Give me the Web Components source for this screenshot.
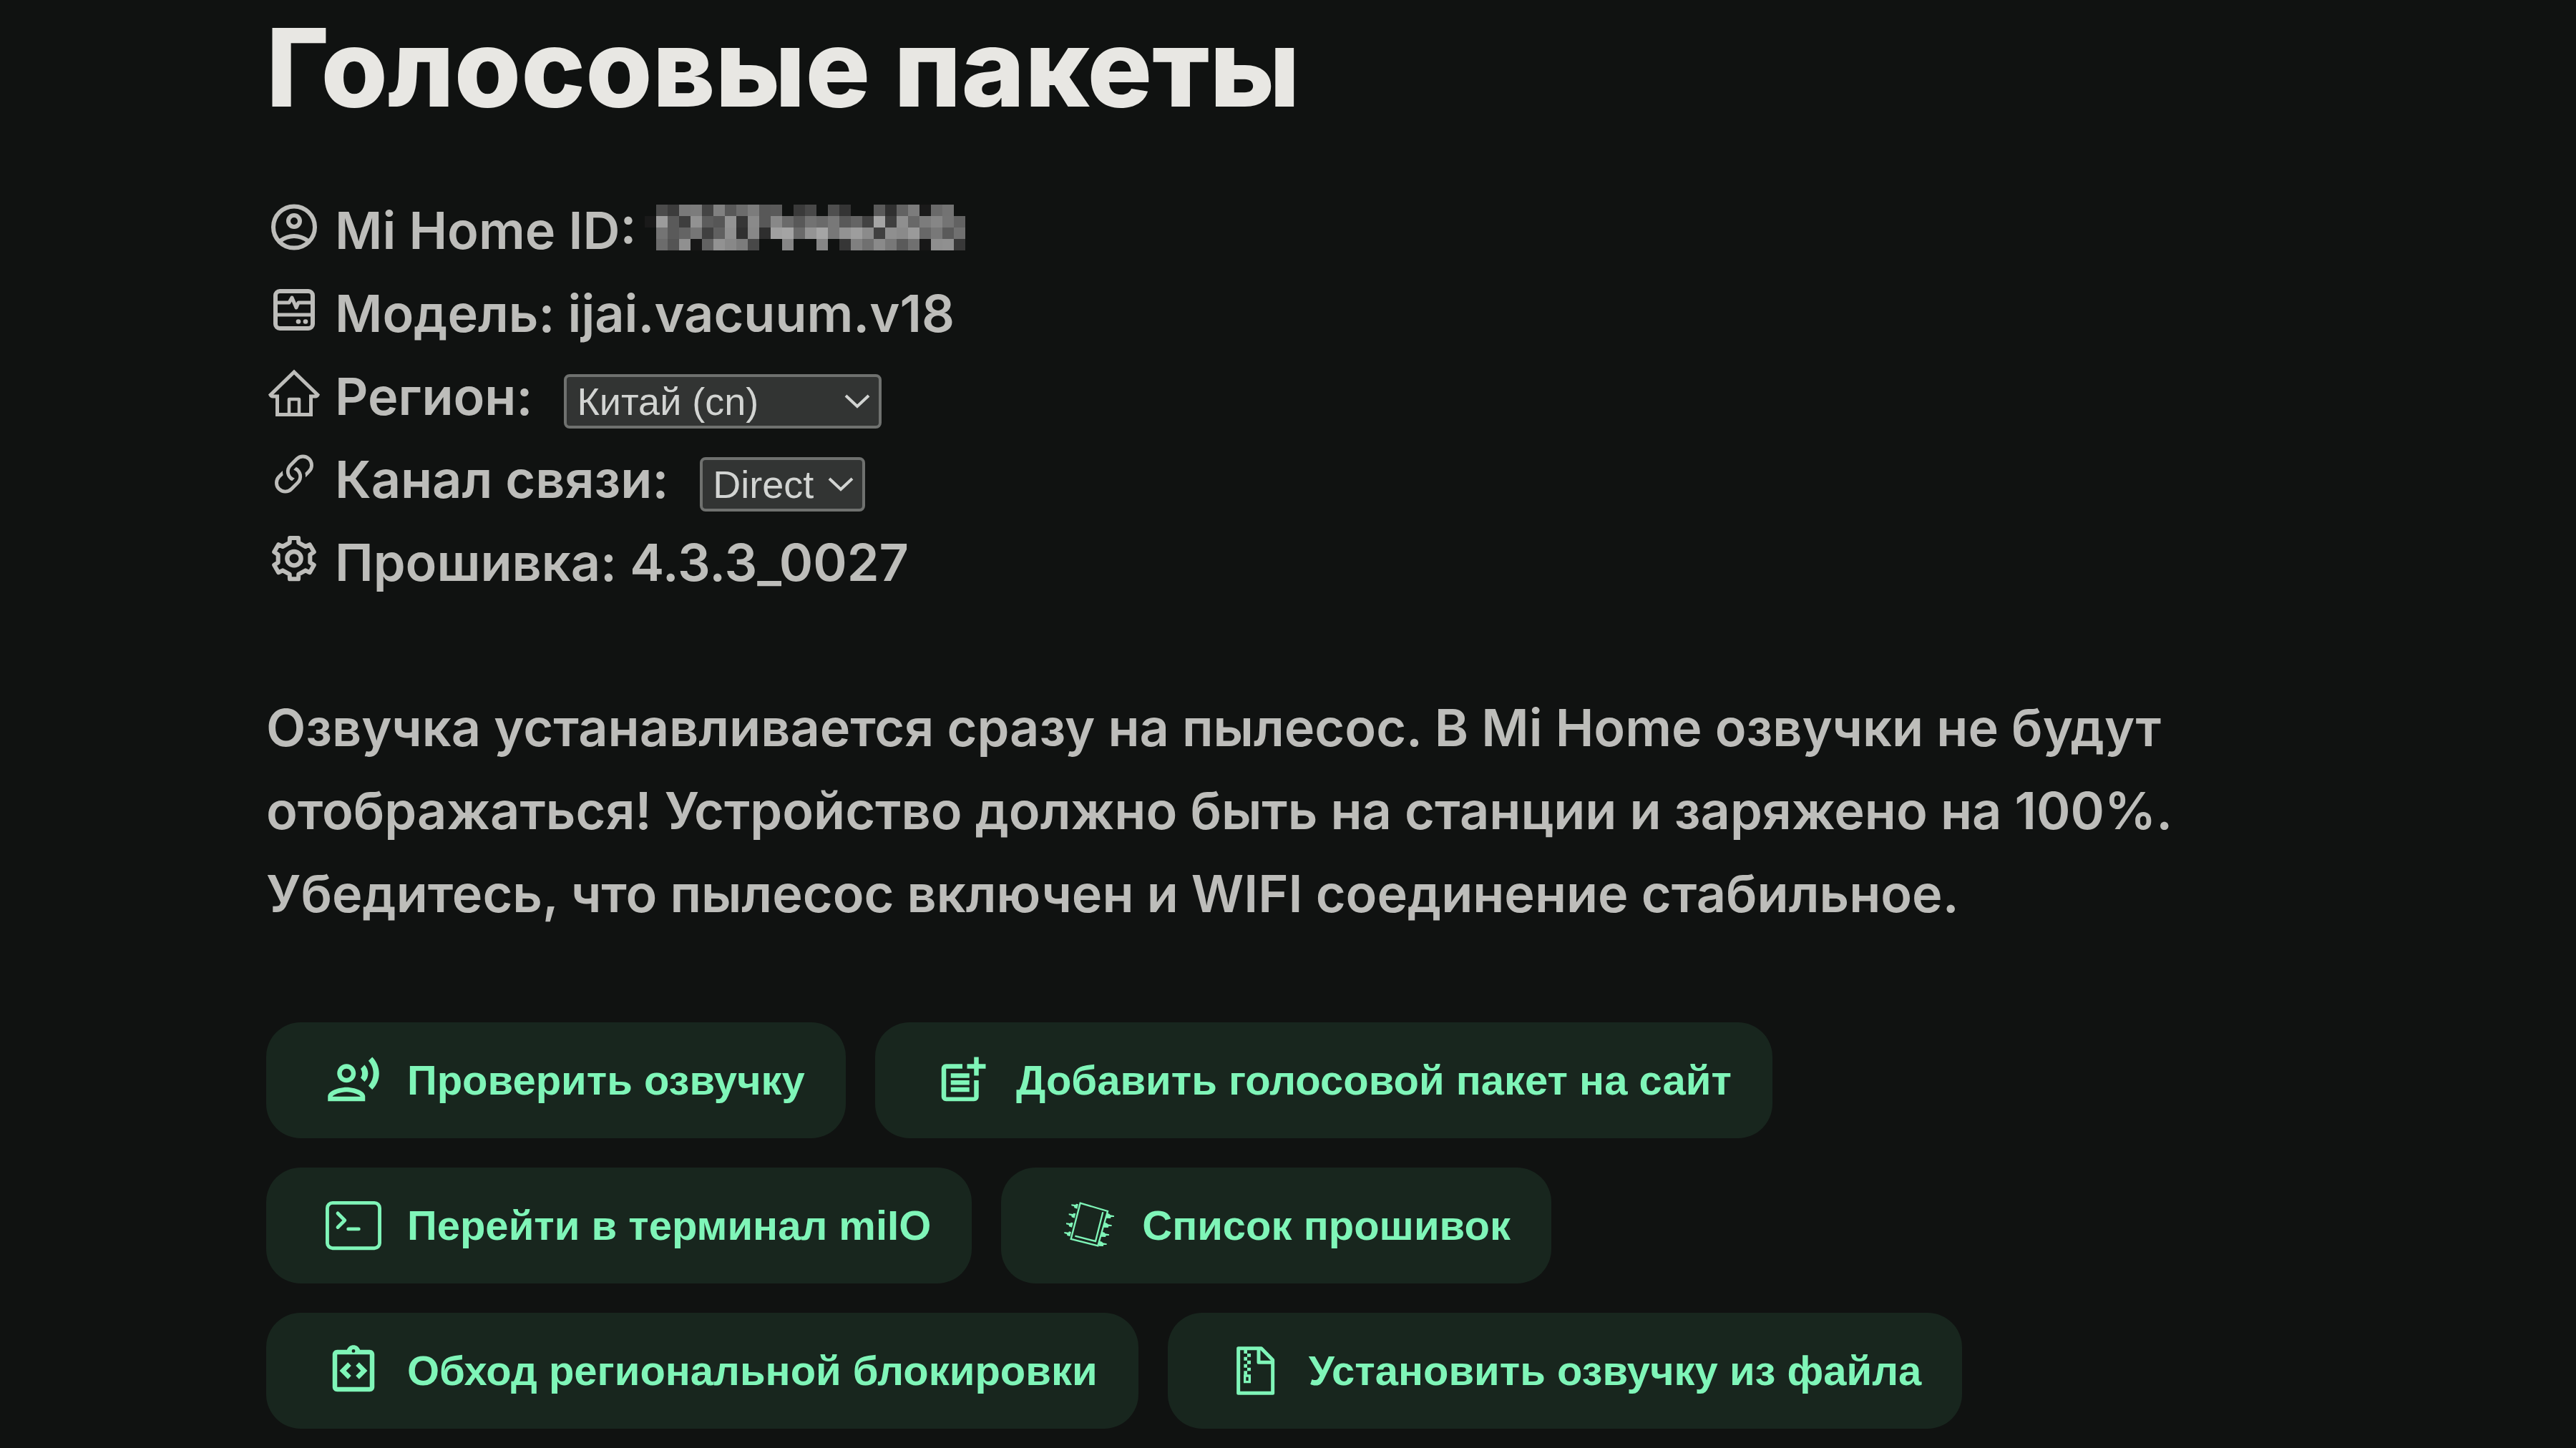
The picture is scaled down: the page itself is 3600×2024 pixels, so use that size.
<!DOCTYPE html>
<html lang="ru">
<head>
<meta charset="utf-8">
<meta name="viewport" content="width=device-width, initial-scale=1">
<title>Голосовые пакеты</title>
<style>
  :root {
    --bg: #101211;
    --text: #bdbdba;
    --heading: #e8e7e3;
    --accent: #7ff5b8;
    --accent-bg: #18261e;
  }
  body { margin: 0; background: var(--bg); color: var(--text); font: 600 72px/116px Inter, "Noto Sans", sans-serif; }
</style>
</head>
<body>
<voice-page>
  <span slot="title">Голосовые пакеты</span>
  <info-row icon="user">Mi Home ID:<masked-value></masked-value></info-row>
  <info-row icon="model">Модель: ijai.vacuum.v18</info-row>
  <info-row icon="home"><field-select label="Регион:" value="Китай (cn)" size="wide"></field-select></info-row>
  <info-row icon="link"><field-select label="Канал связи:" value="Direct"></field-select></info-row>
  <info-row icon="gear">Прошивка: 4.3.3_0027</info-row>
  <span slot="note">Озвучка устанавливается сразу на пылесос. В Mi Home озвучки не будут отображаться! Устройство должно быть на станции и заряжено на 100%. Убедитесь, что пылесос включен и WIFI соединение стабильное.</span>
  <action-button slot="actions" icon="voice">Проверить озвучку</action-button>
  <action-button slot="actions" icon="add">Добавить голосовой пакет на сайт</action-button>
  <action-button slot="actions" icon="terminal">Перейти в терминал miIO</action-button>
  <action-button slot="actions" icon="chip">Список прошивок</action-button>
  <action-button slot="actions" icon="code">Обход региональной блокировки</action-button>
  <action-button slot="actions" icon="zip">Установить озвучку из файла</action-button>
</voice-page>

<script>
const line = 'fill="none" stroke="currentColor" stroke-linejoin="round"';
const chipPins = [[94,49],[83,88],[72,127],[64,165]]
  .map(([x, y]) => `<path d="M${x + 2} ${y - 9}l-9-2-3 4-17-2v6l11 3 1 6 12 4z"/>`).join('') +
  [[218,88],[208,127],[197,166],[187,205]]
  .map(([x, y]) => `<path d="M${x - 2} ${y - 11}l10 3 4 5 16 3v5l-13 0-2 6-19-1z"/>`).join('');

const ICONS = {
  user: ['0 0 78 78', `<g ${line} stroke-width="6"><circle cx="39" cy="39.5" r="29"/><circle cx="39" cy="31" r="8"/><path d="M19 59Q39 45 59 59"/></g>`],
  model: ['0 0 78 78', `<g ${line} stroke-width="6"><rect x="13" y="13" width="52" height="52" rx="6"/><path stroke-width="5" d="M13 29H32L36 22L42 36L45 29H65M13 46H65"/></g><circle cx="45" cy="55.500" r="3.300"/><circle cx="55" cy="55.500" r="3.300"/>`],
  home: ['0 0 78 78', `<g ${line} stroke-width="5"><path d="M39 10L72 42Q71 44 69 44H62.500V69.500H15.500V44H9Q7 44 6 42Z" stroke-linejoin="miter"/><path d="M32 69.500V48H46V69.500" stroke-width="4.500"/></g>`],
  link: ['0 0 16 16', '<path d="M4.715 6.542 3.343 7.914a3 3 0 1 0 4.243 4.243l1.828-1.829A3 3 0 0 0 8.586 5.5L8 6.086a1 1 0 0 0-.154.199 2 2 0 0 1 .861 3.337L6.88 11.45a2 2 0 1 1-2.83-2.83l.793-.792a4 4 0 0 1-.128-1.287z"/><path d="M6.586 4.672A3 3 0 0 0 7.414 9.5l.775-.776a2 2 0 0 1-.896-3.346L9.12 3.55a2 2 0 1 1 2.83 2.83l-.793.792c.112.42.155.855.128 1.287l1.372-1.372a3 3 0 1 0-4.243-4.243z"/>'],
  gear: ['-117 -116 234 234', `<g ${line} stroke-width="18"><path d="M-19-66L-18-86H18L19-66L48-50L65.500-58.600L83.500-27.400L67-16.500V16.500L83.500 27.400L65.500 58.600L48 50L19 66L18 86H-18L-19 66L-48 50L-65.500 58.600L-83.500 27.400L-67 16.500V-16.500L-83.500-27.400L-65.500-58.600L-48-50Z"/><circle r="29" stroke-width="19"/></g>`],
  voice: ['0 0 24 24', '<path d="M9 13c2.21 0 4-1.79 4-4s-1.79-4-4-4-4 1.79-4 4 1.79 4 4 4zm0-6c1.1 0 2 .9 2 2s-.9 2-2 2-2-.9-2-2 .9-2 2-2zm0 8c-2.67 0-8 1.34-8 4v2h16v-2c0-2.66-5.33-4-8-4zm-6 4c.22-.72 3.31-2 6-2 2.7 0 5.8 1.29 6 2H3zM15.08 7.05c.84 1.18.84 2.71 0 3.89l1.68 1.69c2.02-2.02 2.02-5.07 0-7.27l-1.68 1.69zM20.07 2l-1.63 1.63c2.77 3.02 2.77 7.56 0 10.74L20.07 16c3.9-3.89 3.91-9.95 0-14z"/>'],
  add: ['0 0 24 24', '<path d="M17 19.220H5V7h7V5H5c-1.100 0-2 .9-2 2v12c0 1.100.9 2 2 2h12c1.100 0 2-.9 2-2v-7h-2v7.220z"/><path d="M19 2h-2v3h-3v2h3v3h2V7h3V5h-3V2zM7 9h8v2H7zM7 12h8v2H7zM7 15h8v2H7z"/>'],
  terminal: ['0 0 16 16', '<path d="M6 9a.5.5 0 0 1 .5-.5h3a.5.5 0 0 1 0 1h-3A.5.5 0 0 1 6 9M3.854 4.146a.5.5 0 1 0-.708.708L4.793 6.5 3.146 8.146a.5.5 0 1 0 .708.708l2-2a.5.5 0 0 0 0-.708z"/><path d="M2 1a2 2 0 0 0-2 2v10a2 2 0 0 0 2 2h12a2 2 0 0 0 2-2V3a2 2 0 0 0-2-2zm12 1a1 1 0 0 1 1 1v10a1 1 0 0 1-1 1H2a1 1 0 0 1-1-1V3a1 1 0 0 1 1-1z"/>'],
  chip: ['21 12 234 234', `<g fill="none" stroke="currentColor" stroke-width="7"><path d="M104 35L219 69L178 214L65 186Z"/><path d="M199 73L168 195L82 173"/></g>${chipPins}`],
  code: ['0 0 24 24', '<path fill-rule="evenodd" d="M19 3h-4.180C14.400 1.840 13.300 1 12 1s-2.400.840-2.820 2H5c-1.100 0-2 .9-2 2v14c0 1.100.9 2 2 2h14c1.100 0 2-.9 2-2V5c0-1.100-.9-2-2-2zM12 2.750a.75.75 0 1 1 0 1.500.75.75 0 0 1 0-1.500zM19 19H5V5h14z"/><path d="M11 14.170 8.830 12 11 9.830 9.590 8.410 6 12l3.590 3.590zM14.410 15.590 18 12 14.410 8.410 13 9.830 15.170 12 13 14.170z"/>'],
  zip: ['9 21 234 234', `<g ${line} stroke-width="15"><path d="M56 44H152L200 93V232H56Z"/><path d="M141 44V103H200"/></g><path d="M79 50h14v16H79zM93 66h15v14H93zM79 80h14v15H79zM93 95h15v15H93zM79 110h14v15H79zM93 125h15v14H93zM79 139h14v16H79z"/><path fill-rule="evenodd" d="M78 154h30v36H78zM88 164v16h10v-16z"/>`]
};
const icon = name => `<svg class="icon" viewBox="${ICONS[name][0]}" fill="currentColor" aria-hidden="true">${ICONS[name][1]}</svg>`;

class VoicePage extends HTMLElement {
  constructor() {
    super();
    this.attachShadow({ mode: 'open' }).innerHTML = `
      <style>
        :host { display: block; }
        main { display: flex; flex-direction: column; max-width: 2856px; margin: 0 auto; padding: 4px 24px 27px; }
        h1 { margin: 0 0 80px; color: var(--heading); font-size: 151px; line-height: 180px; font-weight: 800; }
        .info { display: flex; flex-direction: column; }
        p { margin: 115px 0 122px; }
        .actions { display: flex; flex-wrap: wrap; gap: 41px; }
      </style>
      <main>
        <h1><slot name="title"></slot></h1>
        <div class="info"><slot></slot></div>
        <p><slot name="note"></slot></p>
        <div class="actions"><slot name="actions"></slot></div>
      </main>`;
  }
}

class InfoRow extends HTMLElement {
  connectedCallback() {
    if (this.shadowRoot) return;
    this.attachShadow({ mode: 'open' }).innerHTML = `
      <style>
        :host { display: flex; align-items: center; gap: 18px; }
        .icon { display: block; flex: none; width: 78px; height: 78px; margin-bottom: 10px; }
      </style>
      ${icon(this.getAttribute('icon'))}<div><slot></slot></div>`;
  }
}

class FieldSelect extends HTMLElement {
  connectedCallback() {
    if (this.shadowRoot) return;
    this.attachShadow({ mode: 'open' }).innerHTML = `
      <style>
        :host { display: flex; align-items: baseline; gap: 44px; }
        .box { display: inline-grid; min-width: 231px; }
        :host([size="wide"]) .box { min-width: 444px; }
        select, svg { grid-area: 1 / 1; }
        select {
          appearance: none; box-sizing: border-box; width: 100%; height: 76px; margin: 0;
          padding: 0 60px 0 14px; border: 4px solid #6f716f; border-radius: 8px;
          background: #323433; color: #d2d4d2; font: 400 54px "Liberation Sans", Arial, sans-serif;
        }
        svg { width: 36px; height: 22px; margin-right: 16px; place-self: center end; pointer-events: none; }
      </style>
      <label for="choice">${this.getAttribute('label')}</label>
      <span class="box">
        <select id="choice"><option>${this.getAttribute('value')}</option></select>
        <svg viewBox="0 0 36 22" fill="none" stroke="#d2d4d2" stroke-width="4" aria-hidden="true"><path d="M2 3L18 18L34 3"/></svg>
      </span>`;
  }
}

/* The account number is hidden behind a grid of grey cells, one hex pair per cell. */
class MaskedValue extends HTMLElement {
  constructor() {
    super();
    const rows = [
      '.. 4b 3c 7a 7c 44 80 58 6c 7c 58 5a .. 3a 48 .. 4f 34 .. .. 5a 30 62 7c 1a 6a 73 ..',
      '1a 9c 5a 3e 92 5c 56 93 36 8a 58 88 6a 58 72 6a 78 58 64 42 a5 3f 8f 68 7c 86 74 62',
      '.. 74 5a 64 76 40 60 90 30 88 2e a0 a4 6a 94 a5 78 92 9d 8b 40 8f 8a 9a 68 78 5a 70',
      '.. 6c 54 90 17 62 92 88 7c 48 .. .. 86 .. .. 86 .. 36 80 70 8a 78 5a 70 17 8e 90 38'
    ];
    const cells = rows.flatMap((r, y) => r.split(' ').map((v, x) =>
      v === '..' ? '' : `<rect x="${x}" y="${y}" width="1" height="1" fill="#${v}${v}${v}"/>`)).join('');
    this.attachShadow({ mode: 'open' }).innerHTML = `
      <style>
        :host { display: inline-block; margin-left: 12px; }
        svg { width: 448px; height: 64px; vertical-align: -2px; }
      </style><svg viewBox="0 0 28 4" shape-rendering="crispEdges" role="img">${cells}</svg>`;
  }
}

class ActionButton extends HTMLElement {
  connectedCallback() {
    if (this.shadowRoot) return;
    this.attachShadow({ mode: 'open' }).innerHTML = `
      <style>
        :host { display: block; }
        button {
          display: flex; align-items: center; gap: 36px; margin: 0; padding: 42px 57px 42px 83px;
          border: 0; border-radius: 48px; background: var(--accent-bg); color: var(--accent); cursor: pointer;
          font: 700 58px/78px "Liberation Sans", Arial, sans-serif; white-space: nowrap;
        }
        .icon { display: block; flex: none; width: 78px; height: 78px; }
      </style>
      <button type="button">${icon(this.getAttribute('icon'))}<span><slot></slot></span></button>`;
  }
}

customElements.define('masked-value', MaskedValue);
customElements.define('field-select', FieldSelect);
customElements.define('info-row', InfoRow);
customElements.define('action-button', ActionButton);
customElements.define('voice-page', VoicePage);
</script>
</body>
</html>
